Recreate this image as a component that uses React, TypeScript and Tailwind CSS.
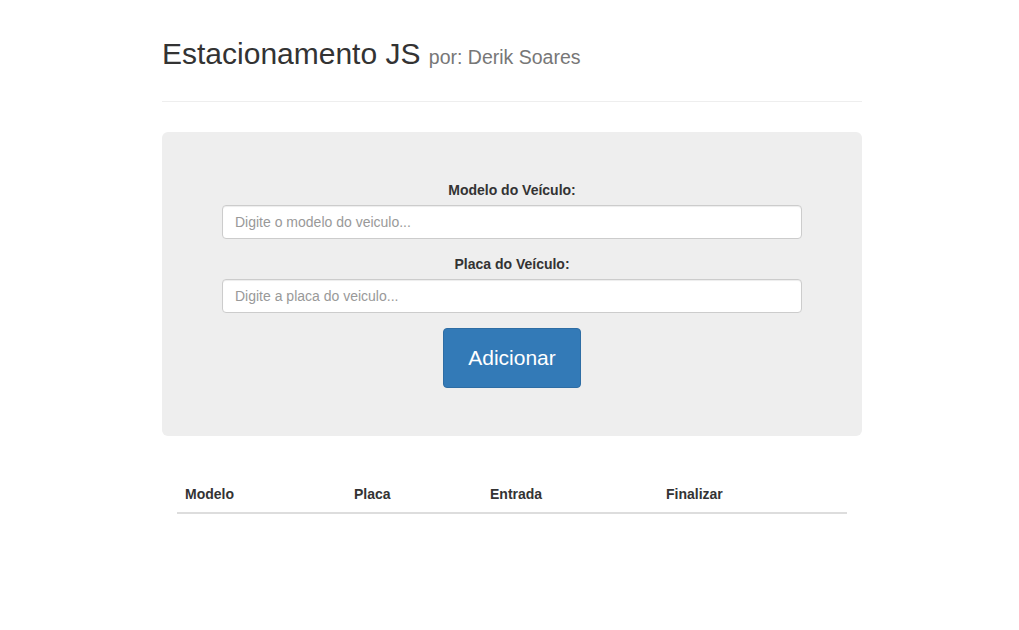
import React from 'react'

export default function App() {
  return (
    <div className="min-h-[630px] bg-white pl-[5px] text-[#333] font-['Liberation_Sans',Arial,sans-serif] text-[14px] leading-[20px]">
      <div className="mx-auto w-[700px] pt-[34px]">
        <div className="border-b border-[#eee] pb-[27px]">
          <h1 className="h-[40px] text-[30px] leading-[40px] font-normal">
            Estacionamento JS{' '}
            <small className="text-[19.5px] leading-none text-[#777] font-normal">por: Derik Soares</small>
          </h1>
        </div>

        <div className="mt-[30px] h-[304px] rounded-[6px] bg-[#eee] pt-[48px]">
          <form className="flex flex-col items-center" onSubmit={(e) => e.preventDefault()}>
            <label className="mb-[5px] font-bold">Modelo do Veículo:</label>
            <input
              className="h-[34px] w-[580px] rounded-[4px] border border-[#ccc] bg-white px-[12px] text-[14px] text-[#555] placeholder:text-[#999] shadow-[inset_0_1px_1px_rgba(0,0,0,0.075)] outline-none"
              placeholder="Digite o modelo do veiculo..."
            />
            <label className="mt-[15px] mb-[5px] font-bold">Placa do Veículo:</label>
            <input
              className="h-[34px] w-[580px] rounded-[4px] border border-[#ccc] bg-white px-[12px] text-[14px] text-[#555] placeholder:text-[#999] shadow-[inset_0_1px_1px_rgba(0,0,0,0.075)] outline-none"
              placeholder="Digite a placa do veiculo..."
            />
            <button
              type="submit"
              className="mt-[15px] h-[60px] w-[138px] rounded-[4px] border border-[#2e6da4] bg-[#337ab7] text-[21px] text-white"
            >
              Adicionar
            </button>
          </form>
        </div>

        <div className="mt-[40px] px-[15px]">
          <table className="w-full border-collapse text-left">
            <thead>
              <tr className="border-b-2 border-[#ddd]">
                <th className="w-[169px] p-[8px] font-bold">Modelo</th>
                <th className="w-[136px] p-[8px] font-bold">Placa</th>
                <th className="w-[176px] p-[8px] font-bold">Entrada</th>
                <th className="p-[8px] font-bold">Finalizar</th>
              </tr>
            </thead>
            <tbody></tbody>
          </table>
        </div>
      </div>
    </div>
  )
}
